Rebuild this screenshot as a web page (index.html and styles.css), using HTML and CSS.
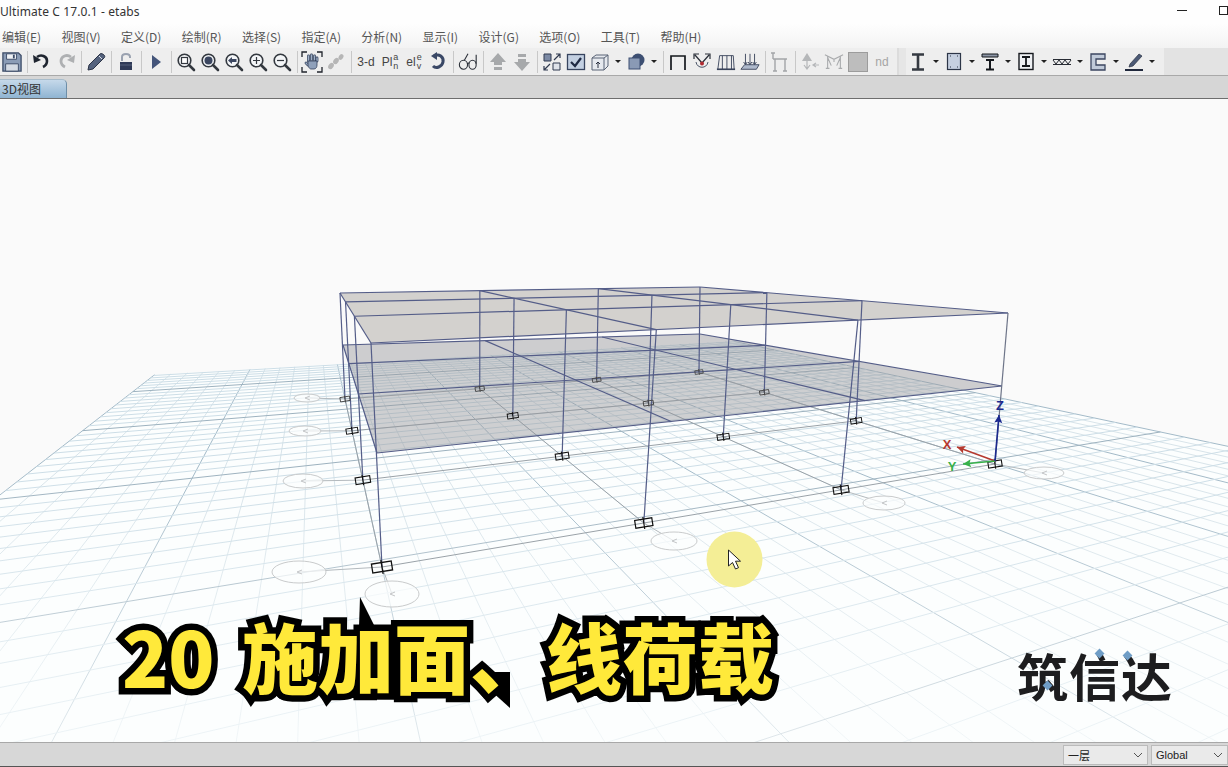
FILE: index.html
```html
<!DOCTYPE html>
<html>
<head>
  <meta charset="utf-8">
  <title>Ultimate C 17.0.1 - etabs</title>
  <link rel="stylesheet" href="styles.css">
</head>
<body>
  <div class="window">
    <div class="titlebar">
      <span class="title">Ultimate C 17.0.1 - etabs</span>
      <div class="winctl">
        <span class="min"></span>
        <span class="restore"></span>
      </div>
    </div>

    <div class="menubar">
      <span>编辑(E)</span><span>视图(V)</span><span>定义(D)</span><span>绘制(R)</span>
      <span>选择(S)</span><span>指定(A)</span><span>分析(N)</span><span>显示(I)</span>
      <span>设计(G)</span><span>选项(O)</span><span>工具(T)</span><span>帮助(H)</span>
    </div>

    <svg class="defs" width="0" height="0">
      <symbol id="lens" viewBox="0 0 20 20">
        <circle cx="8.5" cy="8.5" r="6.3" fill="#f4f6f8" stroke="#33383f" stroke-width="1.6"/>
        <path d="M13 13l5 5" stroke="#33383f" stroke-width="2.6" stroke-linecap="round"/>
      </symbol>
    </svg>

    <div class="toolbar">
      <div class="btn"><svg viewBox="0 0 22 22"><path d="M1 1h17l3 3v17H1z" fill="#8b9cb6" stroke="#3a4a66" stroke-width="1.4"/><path d="M5 2h11v6H5z" fill="#eef1f5" stroke="#3a4a66"/><path d="M4 13h14v8H4z" fill="#d5dbe4" stroke="#3a4a66"/><path d="M12 3h2v4h-2z" fill="#3a4a66"/></svg></div>
      <i class="sep"></i>
      <div class="btn"><svg viewBox="0 0 20 20"><path d="M5 5c4-3 10-1 10 4 0 3-2 5-4 6" fill="none" stroke="#1f2530" stroke-width="2.6"/><path d="M1 3l1 8 7-3z" fill="#1f2530"/></svg></div>
      <div class="btn"><svg viewBox="0 0 20 20"><path d="M15 5C11 2 5 4 5 9c0 3 2 5 4 6" fill="none" stroke="#aeb0b2" stroke-width="2.8"/><path d="M19 3l-1 8-7-3z" fill="#aeb0b2"/></svg></div>
      <i class="sep"></i>
      <div class="btn"><svg viewBox="0 0 20 20"><path d="M2 18l1-5L14 2c1-1 3 0 4 1s1 2 0 3L7 17z" fill="#55637e" stroke="#2b3346"/><path d="M13 4l3 3" stroke="#dfe3ea"/></svg></div>
      <i class="sep"></i>
      <div class="btn"><svg viewBox="0 0 20 20"><path d="M6 9V5c0-4 8-4 8 0v1" fill="none" stroke="#9aa2b0" stroke-width="2"/><path d="M4 10h12v8H4z" fill="#2f3a57"/><path d="M4 13h12" stroke="#56617c"/></svg></div>
      <i class="sep"></i>
      <div class="btn"><svg viewBox="0 0 20 20"><path d="M6 3l9 7-9 7z" fill="#44557a"/></svg></div>
      <i class="sep"></i>
      <div class="btn"><svg viewBox="0 0 20 20"><use href="#lens"/><rect x="5.5" y="5.5" width="6" height="6" fill="#fff" stroke="#33383f" stroke-width="1.2"/></svg></div>
      <div class="btn"><svg viewBox="0 0 20 20"><use href="#lens"/><circle cx="8.5" cy="8.5" r="4" fill="#3b4660"/></svg></div>
      <div class="btn"><svg viewBox="0 0 20 20"><use href="#lens"/><path d="M4 8.5l4-3.5v2h4.500v3H8v2z" fill="#3b4660"/></svg></div>
      <div class="btn"><svg viewBox="0 0 20 20"><use href="#lens"/><path d="M5 8.500h7M8.500 5v7" stroke="#33383f" stroke-width="1.200"/></svg></div>
      <div class="btn"><svg viewBox="0 0 20 20"><use href="#lens"/><path d="M5 8.500h7" stroke="#33383f" stroke-width="1.200"/></svg></div>
      <i class="sep"></i>
      <div class="btn"><svg class="wide" viewBox="0 0 22 22"><path d="M1 6V1h5M16 1h5v5M1 16v5h5M16 21h5v-5" fill="none" stroke="#20242c" stroke-width="1.300"/><path d="M7.500 10V5M10.500 9V4M13.500 9V5M16 10V7M5 12l2 2" fill="none" stroke="#33405a" stroke-width="2.800" stroke-linecap="round"/><path d="M7.500 10V5M10.500 9V4M13.500 9V5M16 10V7M5 12l2 2" fill="none" stroke="#9fb0c8" stroke-width="1.400" stroke-linecap="round"/><path d="M7 10h9v4c0 2-1 4-3 4h-3c-1 0-2-1-3-3z" fill="#8fa0ba" stroke="#33405a" stroke-width=".8"/></svg></div>
      <div class="btn"><svg viewBox="0 0 20 20"><g fill="#b6b6b6"><ellipse cx="5" cy="14" rx="2.400" ry="3.500" transform="rotate(35 5 14)"/><ellipse cx="10" cy="9" rx="2.400" ry="3.500" transform="rotate(35 10 9)"/><ellipse cx="15" cy="5" rx="2.200" ry="3" transform="rotate(35 15 5)"/></g></svg></div>
      <i class="sep"></i>
      <div class="btn lbl">3-d</div>
      <div class="btn lbl">Pl<span class="stack"><b>a</b><b>n</b></span></div>
      <div class="btn lbl">el<span class="stack"><b>e</b><b>v</b></span></div>
      <div class="btn"><svg viewBox="0 0 20 20"><path d="M6 4c5-3 10 1 9 6s-7 7-10 4" fill="none" stroke="#3a4866" stroke-width="3"/><path d="M9 0v8L3 4z" fill="#3a4866"/></svg></div>
      <i class="sep"></i>
      <div class="btn"><svg viewBox="0 0 22 22"><g fill="none" stroke="#2a2f38" stroke-width="1.200"><ellipse cx="6" cy="14" rx="4.500" ry="5"/><ellipse cx="16" cy="14" rx="4" ry="5"/><path d="M10 13c1-1 2-1 2 0M7 9l4-7M20 13V3"/></g></svg></div>
      <i class="sep"></i>
      <div class="btn"><svg viewBox="0 0 20 20"><path d="M10 1l8 9h-4v3H6v-3H2zM6 15h8v3H6z" fill="#a7a9ab"/></svg></div>
      <div class="btn"><svg viewBox="0 0 20 20"><path d="M10 19l8-9h-4V7H6v3H2zM6 2h8v3H6z" fill="#a7a9ab"/></svg></div>
      <i class="sep"></i>
      <div class="btn"><svg viewBox="0 0 20 20"><path d="M2 2h7v7H2z" fill="#7c8aa5" stroke="#303a50"/><path d="M11 11h7v7h-7z" fill="#dfe3ea" stroke="#303a50"/><path d="M12 8l6-6m-4 0h4v4M8 12l-6 6m4 0H2v-4" fill="none" stroke="#303a50" stroke-width="1.200"/></svg></div>
      <div class="btn"><svg viewBox="0 0 20 20"><rect x="1.500" y="2.500" width="17" height="15" fill="#c3d0e2" stroke="#37445f" stroke-width="1.300"/><path d="M5 10l4 4 6-8" fill="none" stroke="#1f2a44" stroke-width="2.200"/></svg></div>
      <div class="btn"><svg viewBox="0 0 20 20"><path d="M2 6l4-3h12v11l-4 4H2z" fill="#e6e9ee" stroke="#5a6476"/><path d="M2 6h12v12M14 6l4-3" fill="none" stroke="#5a6476"/><path d="M8 16v-6m-2 2l2-2 2 2" fill="none" stroke="#2a3040"/></svg></div>
      <div class="dd"></div>
      <div class="btn"><svg viewBox="0 0 20 20"><circle cx="12" cy="8" r="6.500" fill="#3d4f72"/><rect x="3" y="6" width="11" height="11" fill="#8a9ab5" stroke="#3d4f72"/></svg></div>
      <div class="dd"></div>
      <i class="sep"></i>
      <div class="btn"><svg viewBox="0 0 20 20"><path d="M3 18V4h14v14" fill="none" stroke="#15181d" stroke-width="1.700"/></svg></div>
      <div class="btn"><svg viewBox="0 0 20 20"><path d="M3 3l7 8 7-8M2 7V2h5M18 7V2h-5" fill="none" stroke="#2a2f38" stroke-width="1.200"/><path d="M4 10c1 7 11 7 12 0" fill="none" stroke="#4b5568"/><circle cx="10" cy="11.500" r="2" fill="#b02a30"/></svg></div>
      <div class="btn"><svg viewBox="0 0 22 22"><path d="M2 19L4 4h15l1 15M7 4v15M12 4v15M17 4v15" fill="none" stroke="#39435a"/><path d="M1 19h20" stroke="#39435a" stroke-width="1.800"/></svg></div>
      <div class="btn"><svg viewBox="0 0 22 22"><path d="M6 2v12M11 2v12M16 2v12" stroke="#39435a"/><path d="M6 14l-2-3m2 3l2-3m3 3l-2-3m2 3l2-3m3 3l-2-3m2 3l2-3" stroke="#39435a" fill="none"/><path d="M1 19l4-5h16l-3 5z" fill="#aeb9cc" stroke="#39435a"/></svg></div>
      <i class="sep"></i>
      <div class="btn"><svg viewBox="0 0 20 20"><path d="M3 1v6M1 1h4M3 7h14M5 7v12M15 7v12M3 19h4M13 19h4" fill="none" stroke="#a3a5a8" stroke-width="1.400"/></svg></div>
      <i class="sep"></i>
      <div class="btn"><svg viewBox="0 0 20 20"><path d="M7 1l5 8H2z" fill="#b5b7b9"/><path d="M7 9v8M4 13l3 4 3-4M13 13h6m-3-2l-3 2 3 2" fill="none" stroke="#b5b7b9" stroke-width="1.200"/></svg></div>
      <div class="btn"><svg viewBox="0 0 22 22"><path d="M1 3l10 5 10-5M4 5v13M18 5v13M2 18h4M16 18h4M11 8v3M4 6l4 9M18 6l-4 9" fill="none" stroke="#a9abad" stroke-width="1.200"/></svg></div>
      <div class="btn"><svg viewBox="0 0 20 20"><rect x=".5" y=".5" width="19" height="19" fill="#bdbdbd" stroke="#9c9c9c"/></svg></div>
      <div class="btn lbl off">nd</div>
      <div class="grip"></div>
      <div class="btn"><svg viewBox="0 0 20 20"><path d="M4 2.500h12M4 17.500h12M10 3v14" fill="none" stroke="#353a42" stroke-width="2.600"/></svg></div>
      <div class="dd"></div>
      <div class="btn"><svg viewBox="0 0 20 20"><rect x="3.500" y="1.500" width="13" height="16" fill="#c6d0e0" stroke="#2d3648" stroke-width="1.200"/><path d="M6 4h1M13 4h1M6 15h1M13 15h1" stroke="#2d3648"/></svg></div>
      <div class="dd"></div>
      <div class="btn"><svg viewBox="0 0 20 20"><path d="M2 2h16v3H2z" fill="#8d96a6" stroke="#15181d"/><path d="M6 8h8M6 17.500h8M10 8v9" fill="none" stroke="#15181d" stroke-width="2"/></svg></div>
      <div class="dd"></div>
      <div class="btn"><svg viewBox="0 0 20 20"><rect x="3" y="1.500" width="14" height="16" fill="#eef0f3" stroke="#15181d" stroke-width="1.400"/><path d="M6 5h8M6 14h8M10 5v9" fill="none" stroke="#15181d" stroke-width="1.800"/></svg></div>
      <div class="dd"></div>
      <div class="btn"><svg viewBox="0 0 20 20"><path d="M1 7.500h18M1 12.500h18M1 8l3 4 3-4 3 4 3-4 3 4 3-4" fill="none" stroke="#272b33"/></svg></div>
      <div class="dd"></div>
      <div class="btn"><svg viewBox="0 0 20 20"><path d="M3 2h14v5h-9v6h9v5H3z" fill="#c0cad9" stroke="#3b4660" stroke-width="1.300"/></svg></div>
      <div class="dd"></div>
      <div class="btn"><svg viewBox="0 0 20 20"><path d="M6 12L15 2l3 2-9 10-4 1z" fill="#4c5a76" stroke="#2a3142" stroke-width=".7"/><path d="M1 17h18v2H1z" fill="#20283c"/></svg></div>
      <div class="dd"></div>
      <div class="toolbar-end"></div>
    </div>

    <div class="tabstrip">
      <div class="tab">3D视图</div>
    </div>

    <div class="canvas">
      <svg id="view" class="view" viewBox="0 99 1228 643">
        <defs>
          <linearGradient id="nearFade" x1="0" y1="0" x2="0" y2="1">
            <stop offset="0" stop-color="#fcfefe" stop-opacity="0"/>
            <stop offset="1" stop-color="#fcfefe" stop-opacity=".7"/>
          </linearGradient>
        </defs>
      </svg>
      <div class="caption">20 施加面、线荷载</div>
      <div class="logo">筑信达<i class="gem g1"></i><i class="gem g2"></i><i class="gem g3"></i></div>
    </div>

    <div class="statusbar">
      <div class="combo story">一层<svg viewBox="0 0 10 6"><path d="M1 1l4 4 4-4" fill="none" stroke="#555"/></svg></div>
      <div class="combo units">Global<svg viewBox="0 0 10 6"><path d="M1 1l4 4 4-4" fill="none" stroke="#555"/></svg></div>
    </div>
  </div>

  <script src="model.js"></script>
</body>
</html>
```

FILE: styles.css
```css
html, body {
  margin: 0;
  height: 100%;
  overflow: hidden;
}
body {
  font-family: "Noto Sans", "Noto Sans CJK SC", sans-serif;
  color: #333;
  background-color: #fafafa;
}
.window {
  display: flex;
  flex-direction: column;
  height: 100vh;
}
.defs {
  position: absolute;
}
.titlebar {
  height: 24px;
  display: flex;
  align-items: center;
  justify-content: space-between;
  background-color: #fefefe;
  font-size: 12px;
  color: #333;
}
.title {
  letter-spacing: .1px;
  margin-top: -2px;
}
.winctl {
  display: flex;
  align-items: center;
  gap: 32px;
  margin-top: -4px;
}
.winctl .min {
  width: 10px;
  height: 1px;
  background-color: #222;
}
.winctl .restore {
  width: 7px;
  height: 7px;
  border: 1px solid #222;
}
.menubar {
  height: 24px;
  display: flex;
  align-items: center;
  gap: 20.4px;
  padding-left: 2px;
  font-family: "Noto Sans CJK SC", sans-serif;
  font-size: 12px;
  color: #555;
  background: linear-gradient(#fefefe, #f3f3f3);
}
.toolbar {
  height: 27px;
  display: flex;
  align-items: center;
  background-color: #eeeeee;
}
.btn {
  width: 24px;
  height: 27px;
  flex: none;
  display: flex;
  align-items: center;
  justify-content: center;
}
.btn svg {
  width: 20px;
  height: 20px;
}
.btn svg.wide {
  width: 22px;
  height: 22px;
}
.lbl {
  font-family: "Liberation Sans", sans-serif;
  font-size: 12px;
  color: #444;
}
.lbl.off {
  color: #a5a5a5;
}
.stack {
  display: inline-flex;
  flex-direction: column;
  font-size: 9px;
  line-height: 9px;
  margin-left: 1px;
}
.stack b {
  font-weight: normal;
}
.sep {
  width: 6px;
  height: 22px;
  flex: none;
  display: flex;
  justify-content: center;
}
.sep::before {
  content: "";
  width: 1px;
  background-color: #c8c8c8;
}
.dd {
  width: 12px;
  height: 27px;
  flex: none;
  display: flex;
  align-items: center;
  justify-content: center;
}
.dd::before {
  content: "";
  border-left: 3px solid transparent;
  border-right: 3px solid transparent;
  border-top: 3px solid #222;
}
.grip {
  width: 12px;
  height: 27px;
  flex: none;
  background: linear-gradient(90deg, #eee 0, #eee 3px, #dcdcdc 3px, #dcdcdc 5px, #e6e6e6 5px);
}
.toolbar-end {
  flex: 1;
  align-self: stretch;
  margin-left: 6px;
  background-color: #e3e3e3;
}
.tabstrip {
  height: 24px;
  box-sizing: border-box;
  border-top: 1px solid #a9a9a9;
  border-bottom: 1px solid #6e6e6e;
  background-color: #d6d6d6;
  display: flex;
  align-items: flex-end;
}
.tab {
  width: 67px;
  height: 19px;
  box-sizing: border-box;
  padding-left: 2px;
  font-family: "Noto Sans CJK SC", sans-serif;
  font-size: 12px;
  line-height: 18px;
  color: #333;
  background: linear-gradient(#c6d9ea, #8fb4d2);
  border-right: 1px solid #6d8ea8;
  border-top: 1px solid #a8bccb;
  border-top-right-radius: 5px;
}
.canvas {
  flex: 1;
  min-height: 0;
  position: relative;
  background-color: #fafafa;
  overflow: hidden;
}
.view {
  display: block;
  width: 100%;
  height: 100%;
}
.caption {
  position: absolute;
  left: 122px;
  top: 511px;
  font-family: "Noto Sans CJK SC", sans-serif;
  font-weight: 900;
  font-size: 76px;
  line-height: 90px;
  word-spacing: 10px;
  white-space: nowrap;
  color: #ffe93a;
  -webkit-text-stroke: 13px #000;
  paint-order: stroke fill;
  text-shadow: -4px 5px 0 #000;
}
.logo {
  position: absolute;
  left: 1017px;
  top: 541px;
  font-family: "Noto Sans CJK SC", sans-serif;
  font-weight: 700;
  font-size: 51px;
  line-height: 70px;
  letter-spacing: 1px;
  white-space: nowrap;
  color: #1d1d1f;
}
.gem {
  position: absolute;
  width: 7px;
  height: 7px;
  background-color: #6f9dc6;
  transform: rotate(45deg);
}
.g1 { left: 27px; top: 42px; }
.g2 { left: 79px; top: 10px; }
.g3 { left: 107px; top: 12px; }
.statusbar {
  height: 25px;
  box-sizing: border-box;
  border-top: 1px solid #a8a8a8;
  border-bottom: 1px solid #555;
  background-color: #d7d7d7;
  display: flex;
  justify-content: flex-end;
  align-items: center;
  gap: 3px;
  font-family: "Liberation Sans", "Noto Sans CJK SC", sans-serif;
  font-size: 11px;
  color: #222;
}
.combo {
  height: 20px;
  box-sizing: border-box;
  border: 1px solid #bbb;
  background-color: #eaeaea;
  display: flex;
  align-items: center;
  justify-content: space-between;
  padding: 0 4px;
}
.combo svg {
  width: 10px;
  height: 6px;
}
.combo.story {
  width: 85px;
}
.combo.units {
  width: 77px;
}
```

FILE: model.js
```js
// etabs 3D view: ground grid and frame, all in screen coordinates of the window
var NS = 'http://www.w3.org/2000/svg';
var view = document.getElementById('view');

function el(name, attrs, parent) {
  var e = document.createElementNS(NS, name);
  for (var k in attrs) e.setAttribute(k, attrs[k]);
  (parent || view).appendChild(e);
  return e;
}

// unit square -> quad, p0 (0,0) p1 (1,0) p2 (1,1) p3 (0,1)
function plane(p0, p1, p2, p3) {
  var dx1 = p1[0] - p2[0], dx2 = p3[0] - p2[0], sx = p0[0] - p1[0] + p2[0] - p3[0];
  var dy1 = p1[1] - p2[1], dy2 = p3[1] - p2[1], sy = p0[1] - p1[1] + p2[1] - p3[1];
  var det = dx1 * dy2 - dx2 * dy1;
  var g = (sx * dy2 - dx2 * sy) / det, h = (dx1 * sy - sx * dy1) / det;
  var a = p1[0] - p0[0] + g * p1[0], b = p3[0] - p0[0] + h * p3[0];
  var d = p1[1] - p0[1] + g * p1[1], e = p3[1] - p0[1] + h * p3[1];
  return function (u, v) {
    var w = g * u + h * v + 1;
    return [(a * u + b * v + p0[0]) / w, (d * u + e * v + p0[1]) / w, w];
  };
}

function line(p, q, stroke, width, parent) {
  el('line', { x1: p[0], y1: p[1], x2: q[0], y2: q[1], stroke: stroke, 'stroke-width': width }, parent);
}

function quad(pts, fill) {
  el('polygon', { points: pts.map(function (p) { return p[0] + ',' + p[1]; }).join(' '), fill: fill });
}

function poly(map, fill) {
  quad([map(0, 0), map(1, 0), map(1, 1), map(0, 1)], fill);
}

var base = plane([382, 567], [995, 464], [699, 372], [345, 399]);
var slab = plane([377, 453], [1002, 386], [700, 334], [343, 345]);
var roof = plane([371, 343], [1008, 313], [700, 287], [340, 293]);

// ground grid
var U0 = -0.5, U1 = 1.5, V0 = -0.58, V1 = 1.58;
var k, t;
quad([base(U0, V0), base(U1, V0), base(U1, V1), base(U0, V1)], '#fcfefe');
var ground = el('g', {});
for (k = 0; U0 + k / 24 <= U1 + 1e-6; k++) {
  t = U0 + k / 24;
  line(base(t, V0), base(t, V1), k % 6 ? '#d8e4ea' : '#a3bac8', 1, ground);
}
for (k = -14; 0.02 + k * 0.043 <= V1; k++) {
  t = 0.02 + k * 0.043;
  line(base(U0, t), base(U1, t), k % 10 ? '#cddee7' : '#9db2bf', 1, ground);
}
// the grid pales towards the viewer
el('rect', { x: 0, y: 470, width: 1228, height: 272, fill: 'url(#nearFade)' });

// structure grid lines out to the bubbles
var bubbles = [[307, 398, 13, 4], [305, 431, 16, 5], [303, 481, 20, 7], [299, 572, 27, 11],
  [392, 594, 27, 13], [674, 541, 23, 9], [884, 503, 21, 7], [1044, 473, 20, 6]];
for (k = 0; k < 4; k++) {
  line(base(k / 3, 1), base(k / 3, 0), '#9aa2a8', 1);
  line(base(0, k / 3), base(1, k / 3), '#9aa2a8', 1);
  line(base(k / 3, 0), bubbles[4 + k], '#b4babe', 1);
  line(base(0, (3 - k) / 3), bubbles[k], '#b4babe', 1);
}
bubbles.forEach(function (b) {
  el('ellipse', { cx: b[0], cy: b[1], rx: b[2], ry: b[3], fill: 'rgba(252,253,253,.7)', stroke: '#c9cbcc', 'stroke-width': 1 });
  el('path', { d: 'M' + (b[0] + 3) + ' ' + (b[1] - 2) + 'l-5 2 5 2', fill: 'none', stroke: '#c4c6c8', 'stroke-width': 1 });
});

// slabs
poly(slab, 'rgba(150,150,155,.45)');
poly(roof, 'rgba(178,174,170,.55)');

var FRAME = '#545d88';
var i, j;
for (k = 0; k < 4; k++) {
  [slab, roof].forEach(function (m) {
    line(m(k / 3, 0), m(k / 3, 1), FRAME, 1.2);
    line(m(0, k / 3), m(1, k / 3), FRAME, 1.2);
  });
}
for (i = 0; i < 4; i++) {
  for (j = 0; j < 4; j++) {
    line(base(i / 3, j / 3), roof(i / 3, j / 3), i == 3 && j == 0 ? '#6d7488' : FRAME, 1.2);
  }
}

// supports at the column feet
for (i = 0; i < 4; i++) {
  for (j = 0; j < 4; j++) {
    var p = base(i / 3, j / 3);
    var s = Math.max(0.38, 1 / Math.pow(p[2], 0.95));
    var g = el('g', {
      transform: 'translate(' + p[0] + ' ' + p[1] + ') rotate(-9) scale(' + s + ')',
      fill: 'none', stroke: s < 0.5 ? '#444' : '#111', 'stroke-width': 1.3 / Math.sqrt(s)
    });
    el('rect', { x: -10, y: -4.500, width: 20, height: 9 }, g);
    el('path', { d: 'M0 -7V7' }, g);
  }
}

// global axes
var axes = el('g', { 'font-family': 'Liberation Sans, sans-serif', 'font-size': 13, 'font-weight': 'bold' });
function axis(x, y, color, name, lx, ly) {
  el('line', { x1: 995, y1: 461, x2: x, y2: y, stroke: color, 'stroke-width': 1.600 }, axes);
  var ang = Math.atan2(y - 461, x - 995) * 180 / Math.PI;
  el('path', { d: 'M0 0l-8 -4 1.500 4 -1.500 4z', fill: color, transform: 'translate(' + x + ' ' + y + ') rotate(' + ang + ')' }, axes);
  el('text', { x: lx, y: ly, fill: color, 'text-anchor': 'middle' }, axes).textContent = name;
}
axis(957, 447, '#b5392f', 'X', 947, 449);
axis(963, 464, '#37b04a', 'Y', 952, 471);
axis(999, 415, '#1c2a8f', 'Z', 1000, 410);

// pointer highlight and arrow
el('circle', { cx: 734.5, cy: 559.5, r: 28, fill: '#f4ee96' });
el('path', { d: 'M728.500 550v16l4-3.500 3 6.500 3-1.300-3-6.500h5z', fill: '#fff', stroke: '#222', 'stroke-width': 1 });

// stray strokes round the caption
el('path', { d: 'M360 597l15 30h-16z', fill: '#000' });
el('path', { d: 'M470 672l40 36v-36z', fill: '#000' });
```
